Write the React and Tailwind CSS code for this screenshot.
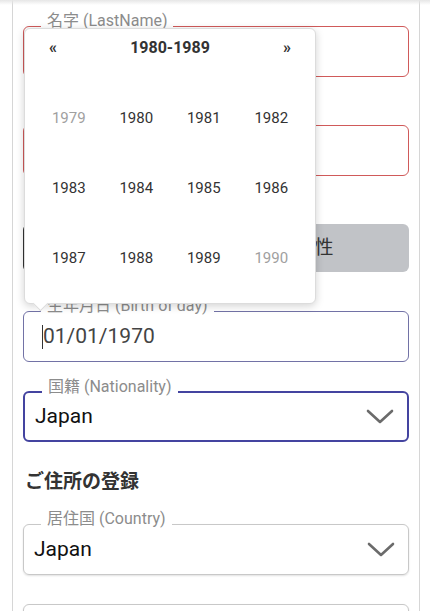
import React from "react";

const font = { fontFamily: '"Roboto", "Noto Sans CJK JP", sans-serif' };

function Field({ label, border, className = "", children }) {
  return (
    <div className={`relative shrink-0 h-[51px] rounded-[6px] flex items-center ${border} ${className}`}>
      {label && (
        <span className="absolute left-[17px] -top-[16px] bg-white px-[6px] text-[16px] leading-[20px] text-[#8c8c8c]">
          {label}
        </span>
      )}
      {children}
    </div>
  );
}

function Chevron() {
  return (
    <svg width="28" height="16" viewBox="0 0 28 16" className="ml-auto mr-[13px]">
      <path d="M2 2 L14 13 L26 2" fill="none" stroke="#6b6b6b" strokeWidth="2.6" strokeLinecap="round" strokeLinejoin="round" />
    </svg>
  );
}

const years = [1979, 1980, 1981, 1982, 1983, 1984, 1985, 1986, 1987, 1988, 1989, 1990];

function YearPicker() {
  return (
    <div className="absolute left-[24px] top-[28px] w-[292px] h-[276px] bg-white rounded-[6px] border border-[#dcdcdc] shadow-[0_2px_8px_rgba(0,0,0,0.18)] px-[10px] z-10">
      <div className="h-[38px] flex items-center justify-between px-[14px] text-[#333]">
        <span className="text-[16px] font-bold">«</span>
        <span className="text-[16px] font-bold">1980-1989</span>
        <span className="text-[16px] font-bold">»</span>
      </div>
      <div className="mt-[16px] grid grid-cols-4">
        {years.map((y) => (
          <div
            key={y}
            className={`h-[70px] flex items-center justify-center text-[15px] ${
              y === 1979 || y === 1990 ? "text-[#a0a0a0]" : "text-[#333]"
            }`}
          >
            {y}
          </div>
        ))}
      </div>
      <div className="absolute left-[10px] -bottom-[6px] w-[11px] h-[11px] bg-white border-r border-b border-[#dcdcdc] rotate-45" />
    </div>
  );
}

export default function App() {
  return (
    <div className="relative w-[430px] h-[611px] overflow-hidden bg-white" style={font}>
      <div className="absolute inset-x-0 top-0 h-[5px] bg-gradient-to-b from-[#e6e6e6] to-transparent z-20" />
      <div className="ml-[12px] w-[408px] h-full border-x border-[#d6d6d6] px-[10px] pt-[26px] flex flex-col">
        <Field label="名字 (LastName)" border="border-[1.5px] border-[#d05a5a]" />
        <Field label="名前 (FirstName)" border="border-[1.5px] border-[#d05a5a]" className="mt-[48px]" />
        <div className="mt-[48px] shrink-0 h-[48px] flex">
          <div className="flex-1 rounded-l-[6px] border border-[#333] flex items-center justify-center text-[19px] text-[#222]">
            男性
          </div>
          <div className="flex-1 rounded-r-[6px] bg-[#c1c3c7] flex items-center justify-center text-[19px] text-[#333] pl-[6px]">
            女性
          </div>
        </div>
        <Field label="生年月日 (Birth of day)" border="border border-[#7272a6]" className="mt-[39px]">
          <span className="ml-[18px] w-px h-[24px] bg-[#333]" />
          <span className="text-[21px] text-[#444]">01/01/1970</span>
        </Field>
        <Field label="国籍 (Nationality)" border="border-2 border-[#4444a0]" className="mt-[29px]">
          <span className="ml-[10px] text-[21px] text-[#111]">Japan</span>
          <Chevron />
        </Field>
        <h2 className="mt-[28px] shrink-0 h-[24px] leading-[24px] text-[19px] font-bold text-[#333] pl-[2px]">ご住所の登録</h2>
        <Field label="居住国 (Country)" border="border border-[#c8c8c8] shadow-[0_1px_2px_rgba(0,0,0,0.12)]" className="mt-[30px]">
          <span className="ml-[10px] text-[21px] text-[#111]">Japan</span>
          <Chevron />
        </Field>
        <Field border="border border-[#c8c8c8] shadow-[0_1px_2px_rgba(0,0,0,0.12)]" className="mt-[29px]" />
      </div>
      <YearPicker />
    </div>
  );
}
